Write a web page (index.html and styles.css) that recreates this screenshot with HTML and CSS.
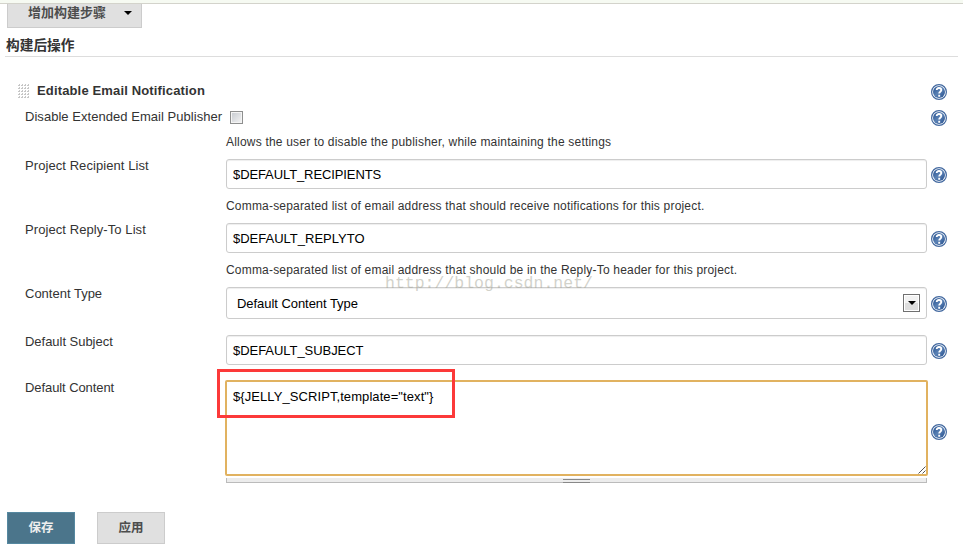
FILE: index.html
```html
<!DOCTYPE html>
<html lang="zh-CN">
<head>
<meta charset="utf-8">
<title>构建后操作</title>
<link rel="stylesheet" href="styles.css">
</head>
<body>
<svg class="defs" aria-hidden="true">
  <defs>
    <linearGradient id="blue" x1="0" y1="0" x2="1" y2="1"><stop offset="0" stop-color="#24508f"/><stop offset=".5" stop-color="#5b82b5"/><stop offset="1" stop-color="#234d8c"/></linearGradient>
    <pattern id="dots" width="3" height="3" patternUnits="userSpaceOnUse"><path d="M1 0h1v2h-2v-1h1z" fill="#c6c6c6"/></pattern>
    <symbol id="help" viewBox="0 0 16 16">
      <circle cx="8" cy="8" r="7.4" fill="#fff" stroke="#42689f" stroke-width="1.2"/>
      <circle cx="8" cy="8" r="6" fill="url(#blue)"/>
      <path d="M5.7 6.1C5.7 3.2 10.3 3.4 10.3 6C10.3 7.8 8.2 7.5 8.2 9.4M8.2 10.8V12.7" fill="none" stroke="#fff" stroke-width="1.9"/>
    </symbol>
  </defs>
</svg>
<div class="topline"></div>
<button class="btn add-step"><span>增加构建步骤</span><i class="caret"></i></button>
<h2 class="section">构建后操作</h2>
<main class="form">
  <div class="row heading">
    <svg class="grip" width="12" height="14"><rect width="12" height="14" fill="url(#dots)"/></svg>
    <b class="title">Editable Email Notification</b>
    <svg class="help"><use href="#help"/></svg>
  </div>
  <div class="row toggle">
    <label class="label l1">Disable Extended Email Publisher</label>
    <span class="check"></span>
    <svg class="help"><use href="#help"/></svg>
  </div>
  <p class="desc first">Allows the user to disable the publisher, while maintaining the settings</p>
  <div class="row">
    <label class="label l2">Project Recipient List</label>
    <div class="field"><span class="f1">$DEFAULT_RECIPIENTS</span></div>
    <svg class="help"><use href="#help"/></svg>
  </div>
  <p class="desc">Comma-separated list of email address that should receive notifications for this project.</p>
  <div class="row">
    <label class="label l3">Project Reply-To List</label>
    <div class="field"><span>$DEFAULT_REPLYTO</span></div>
    <svg class="help"><use href="#help"/></svg>
  </div>
  <p class="desc">Comma-separated list of email address that should be in the Reply-To header for this project.</p>
  <div class="row">
    <label class="label">Content Type</label>
    <div class="field select"><span class="f3">Default Content Type</span><span class="drop"><i class="caret"></i></span></div>
    <svg class="help"><use href="#help"/></svg>
  </div>
  <div class="row subject">
    <label class="label l5">Default Subject</label>
    <div class="field"><span class="f3">$DEFAULT_SUBJECT</span></div>
    <svg class="help"><use href="#help"/></svg>
  </div>
  <div class="row content">
    <label class="label l6">Default Content</label>
    <div class="area-wrap">
      <div class="area"><span class="f5">${JELLY_SCRIPT,template="text"}</span>
        <svg class="resize" width="8" height="8"><path d="M.5 7.5l7-7M4.5 7.5l3-3" stroke="#555" fill="none"/></svg>
      </div>
      <div class="handle"><i></i></div>
      <div class="highlight"></div>
    </div>
    <svg class="help"><use href="#help"/></svg>
  </div>
</main>
<footer class="actions"><button class="btn primary">保存</button><button class="btn">应用</button></footer>
<div class="watermark">http://blog.csdn.net/</div>
</body>
</html>
```
FILE: styles.css
```css
* { box-sizing: border-box; }
body {
  margin: 0;
  height: 544px;
  overflow: hidden;
  position: relative;
  background: #fff;
  color: #333;
  font: 13px/16px "Liberation Sans", "Noto Sans CJK SC", sans-serif;
}
.defs { position: absolute; width: 0; height: 0; }
.topline { height: 4px; background: #f6faf2; border-bottom: 1px solid #d3d3cb; }
.btn {
  width: 68px;
  height: 32px;
  padding: 0;
  border: 1px solid #ccc;
  background: #e0e0e0;
  color: #4d4d4d;
  font: bold 12.5px/16px "Liberation Sans", "Noto Sans CJK SC", sans-serif;
}
.add-step {
  display: flex;
  justify-content: space-between;
  width: 135px;
  height: 24px;
  margin-left: 7px;
  padding: 1px 9px 0 20px;
  border-top: 0;
  font-size: 13px;
}
.caret { width: 0; height: 0; border: 4px solid transparent; border-top-color: #000; border-bottom: 0; }
.add-step .caret { margin-top: 6px; }
.section {
  height: 29px;
  margin: 0 5px;
  padding: 9px 0 0 1px;
  border-bottom: 1px solid #ddd;
  font-size: 13.7px;
  line-height: 17px;
}
.form { padding-top: 20px; }
.row { display: grid; grid-template-columns: 201px 702px 16px; padding-left: 25px; align-items: center; }
.help { width: 16px; height: 16px; margin-left: 3px; position: relative; top: 1px; overflow: visible; }
.heading { grid-template-columns: 19px 884px 16px; height: 28px; padding-left: 18px; }
.heading .help { margin-left: 10px; }
.title { line-height: 16px; letter-spacing: .15px; }
.toggle { grid-template-columns: 205px 698px 16px; height: 28px; }
.toggle .help { top: -1px; }
.label { align-self: start; margin-top: -1px; white-space: nowrap; }
.toggle .label { margin-top: 4px; }
.l1 { letter-spacing: .04px; }
.l2 { letter-spacing: .07px; }
.l3 { letter-spacing: .08px; }
.l5 { letter-spacing: -.03px; }
.l6 { letter-spacing: -.08px; }
.f1 { letter-spacing: -.1px; }
.f3 { letter-spacing: -.05px; }
.f5 { letter-spacing: .08px; }
.check {
  width: 13px;
  height: 13px;
  margin-top: -3px;
  border: 1px solid #8e8f8f;
  background: linear-gradient(135deg, #c5c9cf, #f5f5f5);
  box-shadow: inset 0 0 0 1px #f4f4f4;
}
.desc { height: 34px; margin: 0; padding-left: 226px; font-size: 12px; line-height: 34px; letter-spacing: .19px; white-space: nowrap; }
.desc.first { height: 26px; line-height: 18px; letter-spacing: .2px; }
.field {
  display: flex;
  align-items: center;
  width: 701px;
  height: 30px;
  padding: 1px 6px 0;
  border: 1px solid #ccc;
  border-radius: 3px;
  box-shadow: inset 0 1px 1px #eee;
  color: #000;
}
.field > span:first-child { position: relative; top: .5px; }
.select { height: 32px; justify-content: space-between; padding: 0 6px 0 10px; }
.drop { display: flex; align-items: center; justify-content: center; width: 17px; height: 18px; border: 1px solid #707070; background: linear-gradient(#f2f2f2 50%, #ddd 50%); box-shadow: inset 0 0 0 1px #fff; }
.subject { margin-top: 16px; }
.content { margin-top: 15px; }
.content .label { margin-top: 0; }
.content .help { top: 0; }
.area-wrap { position: relative; }
.area { position: relative; width: 703px; height: 96px; margin-left: -1px; padding: 7px 6px; border: 2px solid #e1b260; border-radius: 2px; color: #000; }
.resize { position: absolute; right: 0; bottom: 0; }
.handle { width: 701px; height: 5px; margin-top: 2px; border: solid #bbb; border-width: 0 1px 1px; background: #ececec; }
.handle i { display: block; width: 27px; height: 4px; margin: 0 auto; position: relative; top: 1px; border: solid #888; border-width: 1px 0; }
.highlight { position: absolute; left: -9px; top: -11px; width: 238px; height: 49px; border: 3px solid #fc3939; }
.actions { display: flex; gap: 22px; margin: 29px 0 0 7px; }
.primary { background: #4b758b; border-color: #5588a0; color: #eee; }
.watermark { position: absolute; left: 385px; top: 274px; color: rgba(165, 165, 150, .5); font: 16.5px/20px "Liberation Mono", monospace; }
```
